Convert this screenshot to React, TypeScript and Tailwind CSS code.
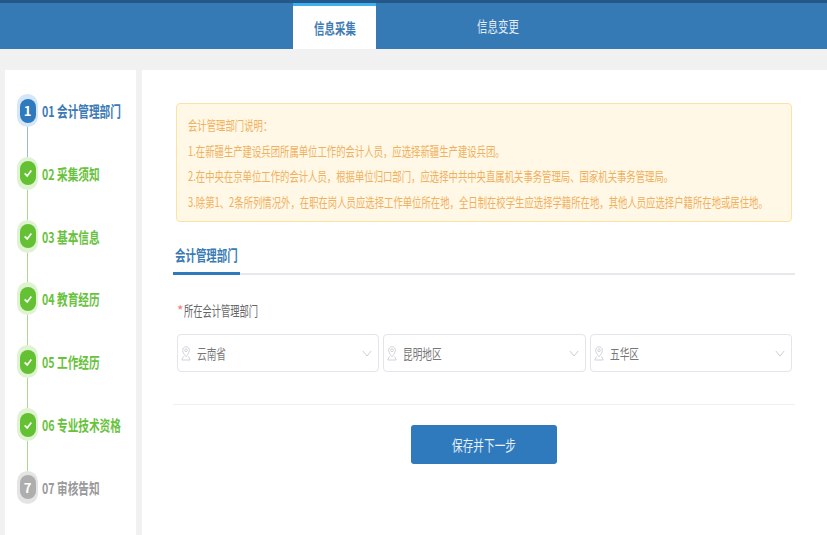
import React from "react";

const font = { fontFamily: '"Noto Sans CJK SC", "Noto Sans", sans-serif' };

type Status = "current" | "done" | "todo";
const steps: { label: string; status: Status; n?: string }[] = [
  { label: "01 会计管理部门", status: "current", n: "1" },
  { label: "02 采集须知", status: "done" },
  { label: "03 基本信息", status: "done" },
  { label: "04 教育经历", status: "done" },
  { label: "05 工作经历", status: "done" },
  { label: "06 专业技术资格", status: "done" },
  { label: "07 审核告知", status: "todo", n: "7" },
];

function Step({ label, status, n, last }: { label: string; status: Status; n?: string; last: boolean }) {
  const ring = status === "current" ? "bg-[#d5e6f7]" : status === "done" ? "bg-[#dff3d3]" : "bg-[#e4e4e4]";
  const dot = status === "current" ? "bg-[#2f7abd]" : status === "done" ? "bg-[#63c133]" : "bg-[#aeaeae]";
  const txt = status === "current" ? "text-[#3a7ab5]" : status === "done" ? "text-[#68c23c]" : "text-[#999999]";
  const line = status === "current" ? "bg-[#9db9d6]" : "bg-[#a9d98c]";
  return (
    <div className="flex h-[62.83px] gap-[4px]">
      <div className="flex w-[21px] flex-col items-center">
        <div className={`flex h-[33px] w-[21px] shrink-0 items-center justify-center rounded-full ${ring}`}>
          <div className={`flex h-[24px] w-[16px] items-center justify-center rounded-full text-[13px] font-bold text-white ${dot}`}>
            {status === "done" ? (
              <svg viewBox="0 0 12 12" className="h-[10px] w-[10px]" fill="none" stroke="white" strokeWidth="2">
                <path d="M2 6.5 L5 9.5 L10 3" />
              </svg>
            ) : (
              n
            )}
          </div>
        </div>
        {!last && <div className={`w-px flex-1 ${line}`} />}
      </div>
      <div className={`h-[33px] w-[80px] origin-left scale-x-[0.71] whitespace-nowrap text-[15px] font-bold leading-[33px] ${txt}`}>{label}</div>
    </div>
  );
}

function PinIcon() {
  return (
    <svg viewBox="0 0 12 18" className="h-[15px] w-[10px] shrink-0" fill="none" stroke="#cfcfd6" strokeWidth="1.1">
      <path d="M6 1 C3.2 1 2 3 2 5.2 C2 8 4.5 11 6 13 C7.5 11 10 8 10 5.2 C10 3 8.8 1 6 1 Z" />
      <circle cx="6" cy="5.2" r="1.6" />
      <path d="M3 12.5 L1 16.8 L11 16.8 L9 12.5" />
    </svg>
  );
}

function Select({ value }: { value: string }) {
  return (
    <div className="flex h-[38px] min-w-0 flex-1 items-center rounded-[4px] border border-[#e4e4ec] pl-[3px] pr-[6px]">
      <PinIcon />
      <span className="ml-[6px] flex-1 origin-left scale-x-[0.69] whitespace-nowrap text-[14px] text-[#777777]">{value}</span>
      <svg viewBox="0 0 12 8" className="h-[7px] w-[10px]" fill="none" stroke="#c4c4cc" strokeWidth="1">
        <path d="M1 1 L6 7 L11 1" />
      </svg>
    </div>
  );
}

export default function App() {
  return (
    <div className="flex h-[535px] w-[827px] flex-col overflow-hidden bg-[#f1f1f1]" style={font}>
      <header className="h-[49px] shrink-0 border-t-[3px] border-[#24588a] bg-[#367ab5]">
        <nav className="ml-[293px] flex h-[46px]">
          <div className="flex w-[83px] items-center justify-center border-t-[3px] border-[#3fb0ee] bg-white">
            <span className="inline-block scale-x-[0.72] whitespace-nowrap text-[14.5px] font-bold text-[#3f7cb3]">信息采集</span>
          </div>
          <div className="ml-[80px] flex w-[83px] items-center justify-center pb-[1px]">
            <span className="inline-block scale-x-[0.72] whitespace-nowrap text-[14.5px] text-[#e3edf6]">信息变更</span>
          </div>
        </nav>
      </header>
      <div className="mt-[21px] flex min-h-0 flex-1 gap-[6px] pl-[5px]">
        <aside className="w-[131px] shrink-0 bg-white pl-[12px] pt-[24px]">
          {steps.map((s, i) => (
            <Step key={s.label} {...s} last={i === steps.length - 1} />
          ))}
        </aside>
        <main className="min-w-0 flex-1 bg-white pl-[31px] pr-[32px] pt-[33px]">
          <div className="mx-[3px] h-[119px] overflow-hidden rounded-[4px] border border-[#fde3a3] bg-[#fff8e6] pl-[10.5px] pt-[8px]">
            <div className="origin-left scale-x-[0.72] whitespace-nowrap text-[13px] leading-[25.6px] text-[#f0b060]">
              <p>会计管理部门说明：</p>
              <p>1.在新疆生产建设兵团所属单位工作的会计人员，应选择新疆生产建设兵团。</p>
              <p>2.在中央在京单位工作的会计人员，根据单位归口部门，应选择中共中央直属机关事务管理局、国家机关事务管理局。</p>
              <p>3.除第1、2条所列情况外，在职在岗人员应选择工作单位所在地，全日制在校学生应选择学籍所在地，其他人员应选择户籍所在地或居住地。</p>
            </div>
          </div>
          <div className="mt-[20px] flex h-[33px] border-b-2 border-[#e8e8ec]">
            <div className="h-[33px] w-[67px] border-b-[3px] border-[#2f7abd] pl-[2px]">
              <span className="block origin-left scale-x-[0.72] whitespace-nowrap text-[14.5px] font-bold leading-[26px] text-[#3a7ab5]">会计管理部门</span>
            </div>
          </div>
          <div className="ml-[4px] mt-[23px] flex h-[24px] items-center text-[14px] leading-[24px] text-[#666666]">
            <span className="w-[7px] text-[#ee7f78]">*</span>
            <span className="origin-left scale-x-[0.66] whitespace-nowrap">所在会计管理部门</span>
          </div>
          <div className="ml-[4px] mr-[3px] mt-[12px] flex gap-[4px]">
            <Select value="云南省" />
            <Select value="昆明地区" />
            <Select value="五华区" />
          </div>
          <div className="mt-[32px] h-px bg-[#f0f0f4]" />
          <div className="mt-[20px] flex justify-center">
            <button className="h-[39px] w-[146px] rounded-[3px] bg-[#2f7abd] pb-[1px] text-[#e8f0f8]">
              <span className="inline-block scale-x-[0.71] whitespace-nowrap text-[15px]">保存并下一步</span>
            </button>
          </div>
        </main>
      </div>
    </div>
  );
}
